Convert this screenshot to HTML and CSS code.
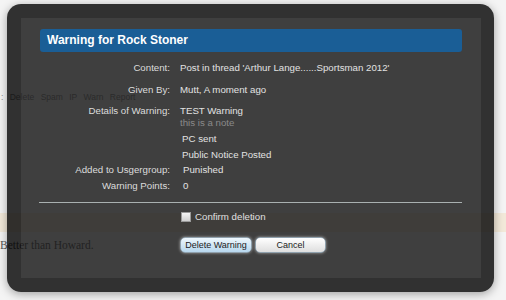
FILE: index.html
```html
<!DOCTYPE html>
<html lang="en">
<head>
    <meta charset="UTF-8">
    <title>Warning for Rock Stoner</title>
    <link rel="stylesheet" href="styles.css">
</head>
<body>
    <!-- Page behind the overlay -->
    <div class="page">
        <div class="post-tools">: Delete Spam IP Warn Report</div>
        <div class="post-band"></div>
        <div class="post-text">Better than Howard.</div>
    </div>

    <!-- Warning overlay -->
    <div class="overlay">
        <div class="overlay-panel">
            <h2 class="heading">Warning for Rock Stoner</h2>

            <dl class="row row-content">
                <dt>Content:</dt>
                <dd>Post in thread 'Arthur Lange......Sportsman 2012'</dd>
            </dl>
            <dl class="row row-given">
                <dt>Given By:</dt>
                <dd>Mutt, A moment ago</dd>
            </dl>
            <dl class="row row-details">
                <dt>Details of Warning:</dt>
                <dd>
                    TEST Warning
                    <div class="note">this is a note</div>
                    <ul class="actions">
                        <li>PC sent</li>
                        <li>Public Notice Posted</li>
                    </ul>
                </dd>
            </dl>
            <dl class="row row-group">
                <dt>Added to Usgergroup:</dt>
                <dd class="shift">Punished</dd>
            </dl>
            <dl class="row row-points">
                <dt>Warning Points:</dt>
                <dd class="shift">0</dd>
            </dl>

            <hr class="divider">

            <div class="row row-confirm">
                <span></span>
                <label class="confirm"><span class="checkbox"></span>Confirm deletion</label>
            </div>
            <div class="row row-buttons">
                <span></span>
                <div class="buttons">
                    <button class="button primary">Delete Warning</button>
                    <button class="button">Cancel</button>
                </div>
            </div>
        </div>
    </div>
</body>
</html>
```

FILE: styles.css
```css
body {
    margin: 0;
    padding: 0;
    width: 506px;
    height: 300px;
    overflow: hidden;
    position: relative;
    background-color: #f4f4f4;
    font-family: "Liberation Sans", Arial, sans-serif;
}

/* background page */
.page {
    padding-top: 91px;
}

.post-tools {
    line-height: 12px;
    font-size: 8.5px;
    color: #8a8a8a;
    word-spacing: 4px;
    padding-left: 1px;
}

.post-band {
    margin-top: 110px;
    height: 19px;
    background-color: #f2e9d9;
}

.post-text {
    margin-top: 6px;
    line-height: 14px;
    font-family: "Liberation Serif", "Times New Roman", serif;
    font-size: 11.5px;
    color: #555;
}

/* overlay */
.overlay {
    position: absolute;
    left: 7px;
    top: 4px;
    width: 487px;
    height: 288px;
    box-sizing: border-box;
    padding: 14px 13px 14px 14px;
    border-radius: 14px;
    background-color: rgba(0, 0, 0, 0.8);
    box-shadow: 0 2px 10px rgba(0, 0, 0, 0.35);
}

.overlay-panel {
    height: 100%;
    padding-top: 11px;
    box-sizing: border-box;
    background-color: rgba(255, 255, 255, 0.07);
    font-size: 9.7px;
    color: #e2e2e2;
}

.heading {
    margin: 0 19px;
    height: 23px;
    line-height: 23px;
    padding-left: 7px;
    border-radius: 3px;
    background-color: #1a5e96;
    color: #fff;
    font-size: 12px;
    font-weight: bold;
}

.row {
    display: grid;
    grid-template-columns: 149px 1fr;
    column-gap: 10px;
    margin: 0;
    line-height: 12px;
}

.row dt {
    text-align: right;
    color: #dcdcdc;
}

.row dd {
    margin: 0;
}

.row-content { margin-top: 10px; }
.row-given { margin-top: 10px; }
.row-details { margin-top: 9px; }
.row-group { margin-top: 3px; }
.row-points { margin-top: 4px; }

.row-group dt, .row-points dt {
    padding-right: 3px;
    margin-right: -3px;
}

.shift {
    padding-left: 3px;
}

.note {
    color: #8a8a8a;
}

.actions {
    list-style: none;
    margin: 0;
    padding: 0 0 0 2px;
}

.actions li {
    margin-top: 4px;
}

.divider {
    margin: 10px 19px 0 18px;
    border: none;
    height: 1px;
    background-color: #a9b0b0;
}

.row-confirm {
    margin-top: 8px;
}

.confirm {
    display: flex;
    align-items: center;
    gap: 4px;
    color: #e0e0e0;
    padding-left: 1px;
}

.checkbox {
    width: 8px;
    height: 8px;
    border: 1px solid #9a9a9a;
    background: linear-gradient(#f4f4f4, #cfcfcf);
}

.row-buttons {
    margin-top: 14px;
}

.buttons {
    display: flex;
    gap: 3px;
}

.button {
    height: 16px;
    padding: 0;
    border: 1px solid #8fa0ac;
    border-radius: 5px;
    font-family: "Liberation Sans", Arial, sans-serif;
    font-size: 9px;
    color: #222;
    background: linear-gradient(#ffffff, #dedede);
    box-shadow: 0 0 3px rgba(255, 255, 255, 0.55);
    width: 71px;
}

.button.primary {
    width: 72px;
    background: linear-gradient(#eef7fd, #b7d7ee);
}
```
